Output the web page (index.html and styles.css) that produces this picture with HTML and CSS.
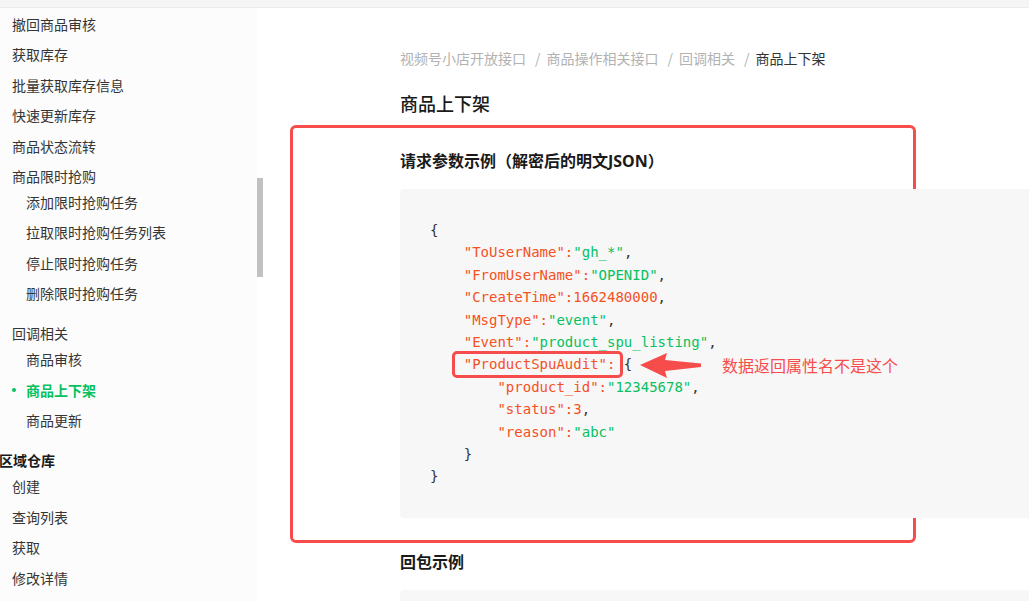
FILE: index.html
```html
<!DOCTYPE html>
<html lang="zh-CN">
<head>
<meta charset="utf-8">
<title>商品上下架</title>
<link rel="stylesheet" href="styles.css">
</head>
<body>
<div class="topbar"></div>
<div class="layout">
  <aside class="sidebar">
    <ul class="menu">
      <li class="item">撤回商品审核</li>
      <li class="item">获取库存</li>
      <li class="item">批量获取库存信息</li>
      <li class="item">快速更新库存</li>
      <li class="item">商品状态流转</li>
      <li class="item">商品限时抢购</li>
      <li class="sub">
        <ul>
          <li class="item">添加限时抢购任务</li>
          <li class="item">拉取限时抢购任务列表</li>
          <li class="item">停止限时抢购任务</li>
          <li class="item">删除限时抢购任务</li>
        </ul>
      </li>
      <li class="item group-gap">回调相关</li>
      <li class="sub">
        <ul>
          <li class="item">商品审核</li>
          <li class="item active">商品上下架</li>
          <li class="item">商品更新</li>
        </ul>
      </li>
      <li class="item section group-gap">区域仓库</li>
      <li class="sub sub-shallow">
        <ul>
          <li class="item">创建</li>
          <li class="item">查询列表</li>
          <li class="item">获取</li>
          <li class="item">修改详情</li>
        </ul>
      </li>
    </ul>
    <div class="track"><div class="thumb"></div></div>
  </aside>
  <main class="main">
    <nav class="crumbs"><span class="crumb">视频号小店开放接口</span><span class="sep">/</span><span class="crumb">商品操作相关接口</span><span class="sep">/</span><span class="crumb">回调相关</span><span class="sep">/</span><span class="crumb current">商品上下架</span></nav>
    <h1 class="title">商品上下架</h1>
    <section class="marked">
      <div class="mark-box"></div>
      <h2 class="subtitle">请求参数示例（解密后的明文JSON）</h2>
      <div class="code-wrap">
<pre class="code">{
    <span class="k">"ToUserName":</span><span class="s">"gh_*"</span>,
    <span class="k">"FromUserName":</span><span class="s">"OPENID"</span>,
    <span class="k">"CreateTime":1662480000</span>,
    <span class="k">"MsgType":</span><span class="s">"event"</span>,
    <span class="k">"Event":</span><span class="s">"product_spu_listing"</span>,
    <span class="k">"ProductSpuAudit":</span> {
        <span class="k">"product_id":</span><span class="s">"12345678"</span>,
        <span class="k">"status":3</span>,
        <span class="k">"reason":</span><span class="s">"abc"</span>
    }
}</pre>
        <div class="key-box"></div>
        <div class="note">
          <svg class="arrow" width="62" height="26" viewBox="0 0 62 26"><polygon points="0,13 27,1 25,8 61,11.5 61,15 25,19 27,26" fill="#f74c4c"/></svg>
          <span class="note-text">数据返回属性名不是这个</span>
        </div>
      </div>
    </section>
    <h2 class="subtitle reply">回包示例</h2>
    <div class="code code-empty"></div>
  </main>
</div>
</body>
</html>
```
FILE: styles.css
```css
* { box-sizing: border-box; }
html, body { margin: 0; padding: 0; overflow: hidden; height: 100%; }
body {
  background: #fff;
  font-family: "Noto Sans", "Noto Sans CJK SC", sans-serif;
  color: #333;
}
.topbar {
  height: 8px;
  background: #f5f5f5;
  border-bottom: 1px solid #ececec;
}
.layout {
  display: flex;
  height: 593px;
}
.sidebar {
  display: flex;
  width: 263px;
  flex: none;
}
.menu {
  list-style: none;
  margin: 0;
  padding: 1px 0 0 0;
  width: 257px;
  background: #fcfcfc;
  font-family: "Noto Sans CJK SC", sans-serif;
  font-size: 14px;
  color: #353535;
}
.menu ul { list-style: none; margin: 0; padding: 0; }
.item {
  height: 30.4px;
  line-height: 30.4px;
  padding-left: 12px;
  white-space: nowrap;
}
.sub { margin-top: -4.5px; }
.sub .item { padding-left: 26px; }
.sub-shallow .item { padding-left: 12px; }
.group-gap { margin-top: 10px; }
.section {
  padding-left: 0;
  margin-left: -1px;
  color: #1a1a1a;
  font-weight: 700;
}
.item.active {
  color: #07c160;
  font-weight: 700;
  position: relative;
}
.item.active::before {
  content: "";
  position: absolute;
  left: 12px;
  top: 13px;
  width: 4px;
  height: 4px;
  border-radius: 50%;
  background: #07c160;
}
.track {
  width: 6px;
  background: #fff;
}
.thumb {
  margin-top: 170px;
  height: 99px;
  background: #c1c1c1;
}
.main {
  flex: 1;
  padding: 40px 0 0 137px;
  overflow: hidden;
}
.crumbs {
  height: 20px;
  line-height: 20px;
  font-family: "Noto Sans CJK SC", sans-serif;
  font-size: 14px;
  color: #b2b2b2;
  white-space: nowrap;
}
.sep { margin: 0 6px 0 9px; }
.current { color: #333; }
.title {
  margin: 22px 0 0 0;
  font-family: "Noto Sans CJK SC", sans-serif;
  font-size: 18px;
  line-height: 26px;
  font-weight: 500;
  color: #1a1a1a;
}
.marked {
  position: relative;
  margin-top: 33px;
}
.mark-box {
  position: absolute;
  left: -110px;
  top: -24px;
  width: 626px;
  height: 418px;
  border: 3px solid #f74c4c;
  border-radius: 6px;
}
.subtitle {
  margin: 0;
  font-family: "Noto Sans", "Noto Sans CJK SC", sans-serif;
  font-size: 16px;
  line-height: 24px;
  font-weight: 700;
  color: #1a1a1a;
}
.subtitle.reply { margin-top: 32px; }
.code-wrap { position: relative; margin-top: 16px; }
.code {
  margin: 0;
  width: 760px;
  padding: 30px;
  background: #f7f7f7;
  border-radius: 4px;
  font-family: "DejaVu Sans Mono", monospace;
  font-size: 14px;
  line-height: 22.4px;
  color: #333;
}
.code-empty {
  margin-top: 16px;
  height: 120px;
}
.k { color: #f5511e; }
.s { color: #07c160; }
.key-box {
  position: absolute;
  left: 52px;
  top: 162px;
  width: 171px;
  height: 27px;
  border: 3px solid #f74c4c;
  border-radius: 5px;
}
.note {
  position: absolute;
  left: 240px;
  top: 163px;
  display: flex;
  align-items: center;
  gap: 20px;
  height: 26px;
}
.arrow { display: block; }
.note-text {
  font-family: "Noto Sans CJK SC", sans-serif;
  font-size: 16px;
  line-height: 26px;
  color: #f74c4c;
  white-space: nowrap;
}
```
